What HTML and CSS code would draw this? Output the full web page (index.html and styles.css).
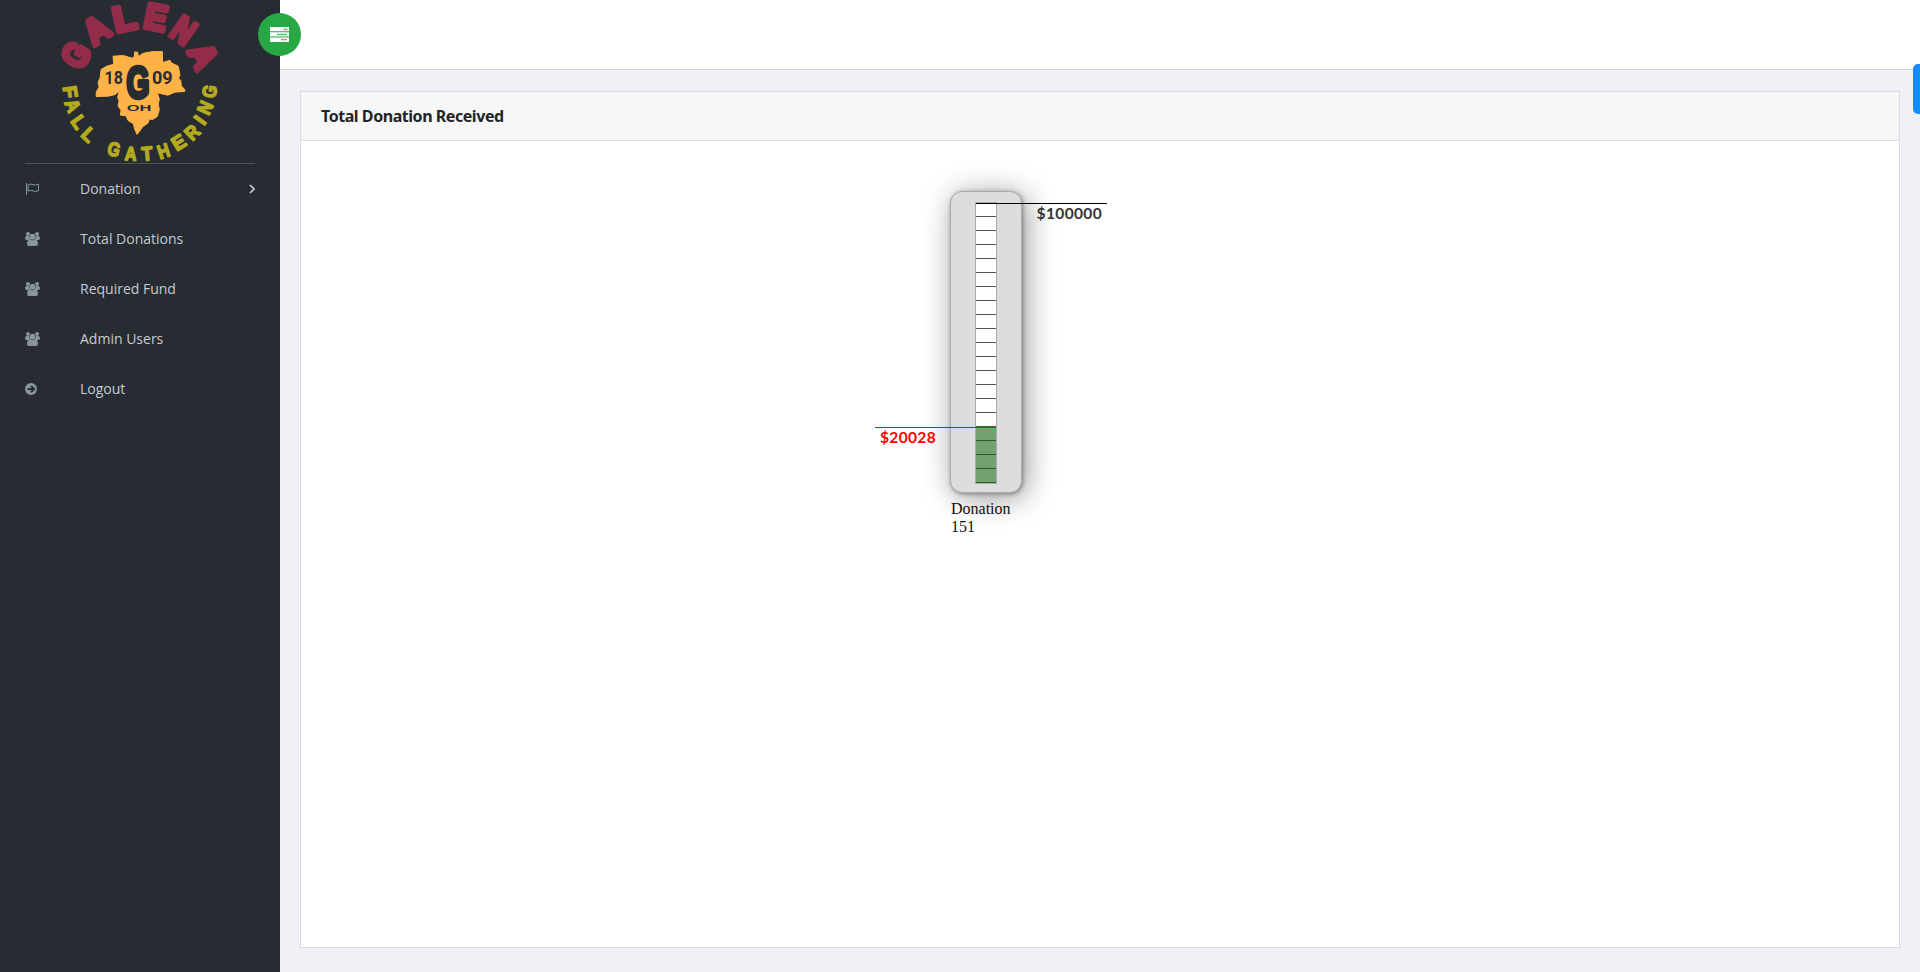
FILE: index.html
```html
<!DOCTYPE html>
<html lang="en">
<head>
<meta charset="utf-8">
<title>Total Donation Received</title>
<link rel="stylesheet" href="styles.css">
</head>
<body>
<svg class="defs" width="0" height="0">
  <symbol id="users" viewBox="0 0 30 28">
    <circle cx="6" cy="4" r="4"/><circle cx="24" cy="4" r="4"/><path d="M3 8h6q0 5 3 8H3q-3 0-3-4 0-3 3-4zM21 8h6q3 1 3 4 0 4-3 4h-9q3-3 3-8z"/>
    <circle class="halo" cx="15" cy="9.500" r="6.300"/><circle cx="15" cy="9.500" r="5.900"/>
    <path d="M9 15q6 3 12 0 5 1 5 9 0 4-4 4H8q-4 0-4-4 0-8 5-9z"/>
  </symbol>
</svg>
<div class="layout">
  <aside class="sidebar">
    <svg class="logo" viewBox="0 0 600 490" width="200" height="163">
      <path class="leaf" d="M284 156L293 157 295 170 310 160 340 155 367 155 368 188 390 181 394 189 415 199 420 225 416 235 423 243 424 258 435 270 434 275 405 277 384 286 352 279 358 298 355 313 358 330 352 350 338 359 328 358 324 370 308 381 302 390 291 404 284 388 280 372 264 362 258 348 241 346 243 332 234 318 237 304 233 292 238 272 226 284 205 289 168 290 169 275 177 262 174 247 180 235 183 209 200 199 221 193 219 169 250 167 276 175 283 170z"/>
      <g class="arc-top">
        <text transform="translate(107 165) rotate(-59) scale(.84 1)" y="37">G</text>
        <text transform="translate(168 90) rotate(-34) scale(.9 1)" y="37">A</text>
        <text transform="translate(253 54) rotate(-12) scale(1.050 1)" y="37">L</text>
        <text transform="translate(347 52) rotate(12) scale(.94 1)" y="37">E</text>
        <text transform="translate(431 91) rotate(35) scale(.8 1)" y="37">N</text>
        <text transform="translate(490 168) rotate(64) scale(.9 1)" y="37">A</text>
      </g>
      <g class="arc-bottom">
        <text transform="translate(90 276) rotate(82)" y="20">F</text>
        <text transform="translate(98 318) rotate(68) scale(.88 1)" y="20">A</text>
        <text transform="translate(116 367) rotate(55)" y="20">L</text>
        <text transform="translate(146 405) rotate(44)" y="20">L</text>
        <text transform="translate(222 449) rotate(16) scale(.82 1)" y="20">G</text>
        <text transform="translate(272 462) rotate(3) scale(.84 1)" y="20">A</text>
        <text transform="translate(321 462) rotate(-5) scale(.92 1)" y="20">T</text>
        <text transform="translate(371 454) rotate(-18) scale(.84 1)" y="20">H</text>
        <text transform="translate(416 428) rotate(-32)" y="20">E</text>
        <text transform="translate(457 398) rotate(-44) scale(.9 1)" y="20">R</text>
        <text transform="translate(480 361) rotate(-54)" y="20">I</text>
        <text transform="translate(496 324) rotate(-66) scale(.88 1)" y="20">N</text>
        <text transform="translate(509 275) rotate(-80) scale(.84 1)" y="20">G</text>
      </g>
      <text class="year" transform="translate(221 254) scale(.9 1)">18</text>
      <text class="year" transform="translate(367 254) scale(1.020 1)">09</text>
      <text class="initial" transform="translate(294 248) scale(.66 1)" y="48">G</text>
      <text class="state" transform="translate(297 335) scale(1.900 1)">OH</text>
    </svg>
    <ul class="menu">
      <li><svg class="icon" width="15" height="14" viewBox="0 0 15 14"><path class="line" d="M1.500 1v12M3 3Q5.500 1.500 8 2.600T13.500 2V8.700Q11 10 8 8.900T3 9.100z"/></svg><span>Donation</span><svg class="chevron" width="6" height="10" viewBox="0 0 6 10"><path d="M1 1l4 4-4 4"/></svg></li>
      <li><svg class="icon" width="15" height="14"><use href="#users"/></svg><span>Total Donations</span></li>
      <li><svg class="icon" width="15" height="14"><use href="#users"/></svg><span>Required Fund</span></li>
      <li><svg class="icon" width="15" height="14"><use href="#users"/></svg><span>Admin Users</span></li>
      <li><svg class="icon" width="15" height="12" viewBox="0 0 15 12"><circle cx="6" cy="6" r="6"/><path class="cut" d="M2.500 6h6M6 2.800L9.200 6 6 9.200"/></svg><span>Logout</span></li>
    </ul>
  </aside>
  <div class="page">
    <header class="topbar"></header>
    <main class="card">
      <h1>Total Donation Received</h1>
      <div class="card-body">
        <div class="thermo">
          <div class="tube"><div class="fill"></div></div>
          <div class="goal">$100000</div>
          <div class="raised">$20028</div>
        </div>
        <div class="caption">Donation<br>151</div>
      </div>
    </main>
  </div>
</div>
<button class="toggle" aria-label="Menu"><svg width="19" height="15" viewBox="0 0 19 15"><path d="M0 0h19v4.300H0zM0 5.300h19v4.200H0zM0 10.500h19V15H0z"/><path class="bars" d="M13.500 2.500h4M7 7.500h10M11 12.700h6"/></svg></button>
<div class="side-tab"></div>
</body>
</html>
```
FILE: styles.css
```css
* { box-sizing: border-box; }
body { margin: 0; background: #f0f1f7; font-family: "Open Sans", sans-serif; }
.defs { position: absolute; }
.layout { display: flex; height: 972px; }
.sidebar { width: 280px; background: #272c33; flex: none; padding: 0 25px; }
.logo { display: block; margin-left: 15px; overflow: visible; }
.logo text { font-family: "Liberation Sans", sans-serif; font-weight: bold; text-anchor: middle; stroke-linejoin: round; }
.leaf { fill: #ffb347; stroke: #ffb347; stroke-width: 3; stroke-linejoin: round; }
.arc-top { fill: #932c48; stroke: #932c48; stroke-width: 14; font-size: 107px; }
.arc-bottom { fill: #b4a91f; stroke: #b4a91f; stroke-width: 5; font-size: 58px; }
.logo .year { fill: #272c33; font-size: 53px; font-family: Roboto, sans-serif; }
.initial { fill: #272c33; stroke: #272c33; stroke-width: 13; font-size: 134px; }
.state { fill: #272c33; font-size: 26px; }
.menu { list-style: none; margin: 0; padding: 0; border-top: 1px solid #4e5257; }
.menu li { display: flex; align-items: center; height: 50px; color: #c8c9ce; font-size: 14px; }
.menu span { flex: 1; margin-left: 40px; padding-bottom: 2px; }
.icon { fill: #8b939b; }
.line { fill: none; stroke: #8b939b; }
.halo { fill: #272c33; }
.cut { fill: none; stroke: #272c33; stroke-width: 1.800; }
.chevron { fill: none; stroke: #c8c9ce; stroke-width: 1.700; }
.page { flex: 1; display: flex; flex-direction: column; }
.topbar { height: 70px; background: #fff; border-bottom: 1px solid #d2d3d8; }
.card { margin: 21px 20px 24px; flex: 1; display: flex; flex-direction: column; background: #fff; border: 1px solid #dadbdf; }
.card h1 { margin: 0; height: 49px; padding: 0 20px; background: #f7f7f7; border-bottom: 1px solid #dadbdd; color: #212529; font: bold 16px/49px "Noto Sans", sans-serif; letter-spacing: -.45px; }
.card-body { padding: 50px 0 0 649px; }
.thermo { position: relative; width: 72px; height: 302px; padding: 10px 24px; background: #ddd; border: 1px solid #aaa; border-radius: 12px; box-shadow: 1px 1px 4px rgba(0,0,0,.35), 4px 4px 30px rgba(0,0,0,.42); }
.tube { position: relative; width: 22px; height: 282px; border: 1px solid #aaa; background: repeating-linear-gradient(#fff 0 13px, #555 13px 14px); }
.fill { position: absolute; left: 0; right: 0; bottom: 0; height: 56px; background: rgba(20,100,20,.6); }
.goal, .raised { position: absolute; font: bold 15.500px/19px Lato, sans-serif; letter-spacing: .35px; }
.goal { left: 25px; top: 11px; width: 131px; padding-right: 5px; border-top: 1px solid #000; color: #333; text-align: right; }
.raised { left: -76px; top: 235px; width: 121px; padding-left: 5px; border-top: 1px solid #f00; color: #f00; }
.caption { margin-top: 7px; padding-left: 1px; font: 16px/18px "Liberation Serif", serif; color: #111; }
.toggle { position: absolute; left: 258px; top: 13px; width: 43px; height: 43px; border: 0; border-radius: 50%; padding: 0; background: #28a745; display: flex; align-items: center; justify-content: center; }
.toggle svg { fill: #fff; }
.bars { stroke: #5cbc72; stroke-width: 1.300; }
.side-tab { position: absolute; right: 0; top: 64px; width: 7px; height: 50px; background: #158bff; border-radius: 5px 0 0 5px; }
```
